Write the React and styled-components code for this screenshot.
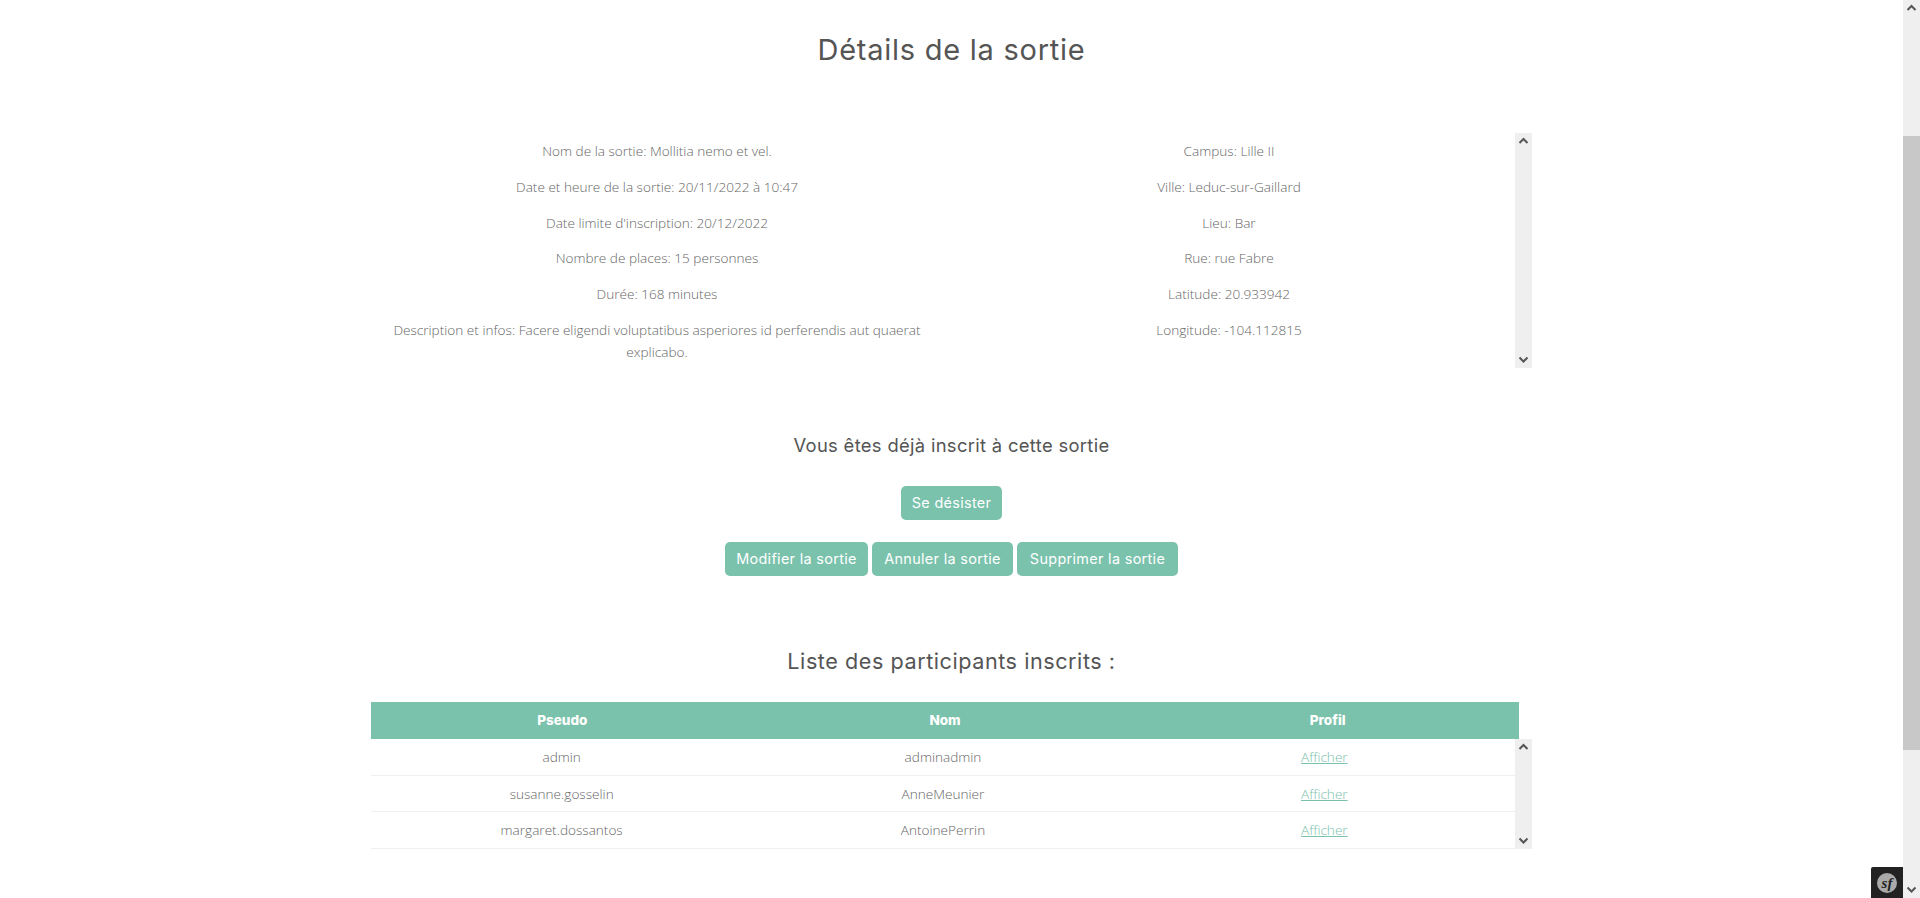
import React from "react";
import styled, { createGlobalStyle } from "styled-components";

const GREEN = "#7ac2ac";
const Global = createGlobalStyle`
  html, body { margin: 0; padding: 0; height: 100%; overflow: hidden; background: #fff; }
  #root { height: 100%; }
`;
const Screen = styled.div`
  display: flex; height: 898px; width: 1920px; position: relative; overflow: hidden;
  font-family: "Open Sans", "Noto Sans", sans-serif; color: #666;
`;
const Main = styled.main`
  width: 1903px; flex: none; display: flex; flex-direction: column; align-items: center;
`;
const Title = styled.h1`
  margin: 32px 0 0; height: 36px; font: 400 29px/36px Inter, sans-serif; letter-spacing: 0.75px; color: #555; text-align: center;
`;
const Frame = styled.div`
  display: flex; width: 1161px; margin: 65px 0 0 0;
`;
const DetailsFrame = styled(Frame)`
  height: 235px;
`;
const Columns = styled.div`
  flex: 1; display: grid; grid-template-columns: 1fr 1fr; padding-top: 7px; align-content: start;
`;
const Column = styled.div`
  padding: 0 12px; text-align: center;
`;
const Line = styled.p`
  margin: 0 0 14.2px; font-size: 13.6px; font-weight: 300; line-height: 21.6px;
`;
const Bar = styled.div`
  width: 17px; flex: none; background: #efefef; display: flex; flex-direction: column; align-items: center; justify-content: space-between;
`;
const Chevron = styled.svg`
  width: 17px; height: 17px; flex: none; display: block;
`;
const Arrow = ({ down }) => (
  <Chevron viewBox="0 0 17 17">
    <path d={down ? "M4.5 6.5 L8.5 10.5 L12.5 6.5" : "M4.5 10 L8.5 6 L12.5 10"} fill="none" stroke="#555" strokeWidth="2" />
  </Chevron>
);
const Notice = styled.h3`
  margin: 65px 0 0; height: 24px; font: 400 18.4px/24px Inter, sans-serif; letter-spacing: 0.32px; color: #555; text-align: center;
`;
const ButtonRow = styled.div`
  display: flex; justify-content: center; gap: 4px; margin-top: ${(p) => p.$top}px;
`;
const Button = styled.button`
  height: 34px; padding: 0; width: ${(p) => p.$w}px; border: none; border-radius: 5px; background: ${GREEN}; color: #fff;
  font: 400 14.4px/34px Inter, sans-serif; letter-spacing: 0.33px; text-align: center;
`;
const SubTitle = styled.h2`
  margin: 71px 0 0; height: 28px; font: 400 21.6px/28px Inter, sans-serif; letter-spacing: 0.55px; color: #555; text-align: center;
`;
const Table = styled.section`
  width: 1161px; margin: 27px 0 0 0;
`;
const Head = styled.div`
  display: grid; grid-template-columns: repeat(3, 1fr); width: 1148px; height: 37px; background: ${GREEN}; color: #fff;
  font: 800 13.5px/36px Inter, sans-serif; text-align: center;
`;
const BodyFrame = styled.div`
  display: flex; height: 110px;
`;
const Rows = styled.div`
  flex: 1; display: flex; flex-direction: column;
`;
const Row = styled.div`
  display: grid; grid-template-columns: repeat(3, 1fr); height: 37px; box-sizing: border-box; border-bottom: 1px solid #efefef;
  font-size: 13.6px; font-weight: 300; line-height: 36px; text-align: center;
  &:nth-child(2) { height: 36px; }
`;
const Link = styled.a`
  color: ${GREEN}; text-decoration: underline;
`;
const PageBar = styled(Bar)`
  height: 898px; justify-content: flex-start;
`;
const Thumb = styled.div`
  width: 17px; height: 614px; margin-top: 119px; background: #c8c8c8; flex: none;
`;
const Spacer = styled.div`flex: 1;`;
const SfBadge = styled.div`
  position: absolute; right: 17px; bottom: 0; width: 32px; height: 31px; background: #222; border-top-left-radius: 2px;
  display: flex; align-items: center; justify-content: center;
`;
const SfLogo = styled.span`
  width: 20px; height: 20px; border-radius: 50%; background: #aaa; color: #222; display: flex; align-items: center; justify-content: center;
  font: italic 700 15px/20px "Liberation Serif", serif;
`;

const left = [
  "Nom de la sortie: Mollitia nemo et vel.",
  "Date et heure de la sortie: 20/11/2022 à 10:47",
  "Date limite d'inscription: 20/12/2022",
  "Nombre de places: 15 personnes",
  "Durée: 168 minutes",
  "Description et infos: Facere eligendi voluptatibus asperiores id perferendis aut quaerat explicabo.",
];
const right = ["Campus: Lille II", "Ville: Leduc-sur-Gaillard", "Lieu: Bar", "Rue: rue Fabre", "Latitude: 20.933942", "Longitude: -104.112815"];
const people = [
  ["admin", "adminadmin"],
  ["susanne.gosselin", "AnneMeunier"],
  ["margaret.dossantos", "AntoinePerrin"],
];

export default function App() {
  return (
    <Screen>
      <Global />
      <Main>
        <Title>Détails de la sortie</Title>
        <DetailsFrame>
          <Columns>
            <Column>{left.map((t) => <Line key={t}>{t}</Line>)}</Column>
            <Column>{right.map((t) => <Line key={t}>{t}</Line>)}</Column>
          </Columns>
          <Bar><Arrow /><Arrow down /></Bar>
        </DetailsFrame>
        <Notice>Vous êtes déjà inscrit à cette sortie</Notice>
        <ButtonRow $top={29}><Button $w={101}>Se désister</Button></ButtonRow>
        <ButtonRow $top={22}>
          <Button $w={143}>Modifier la sortie</Button>
          <Button $w={141}>Annuler la sortie</Button>
          <Button $w={161}>Supprimer la sortie</Button>
        </ButtonRow>
        <SubTitle>Liste des participants inscrits :</SubTitle>
        <Table>
          <Head><span>Pseudo</span><span>Nom</span><span>Profil</span></Head>
          <BodyFrame>
            <Rows>
              {people.map(([a, b]) => (
                <Row key={a}><span>{a}</span><span>{b}</span><span><Link href="#">Afficher</Link></span></Row>
              ))}
            </Rows>
            <Bar><Arrow /><Arrow down /></Bar>
          </BodyFrame>
        </Table>
      </Main>
      <PageBar>
        <Arrow />
        <Thumb />
        <Spacer />
        <Arrow down />
      </PageBar>
      <SfBadge><SfLogo>sf</SfLogo></SfBadge>
    </Screen>
  );
}
